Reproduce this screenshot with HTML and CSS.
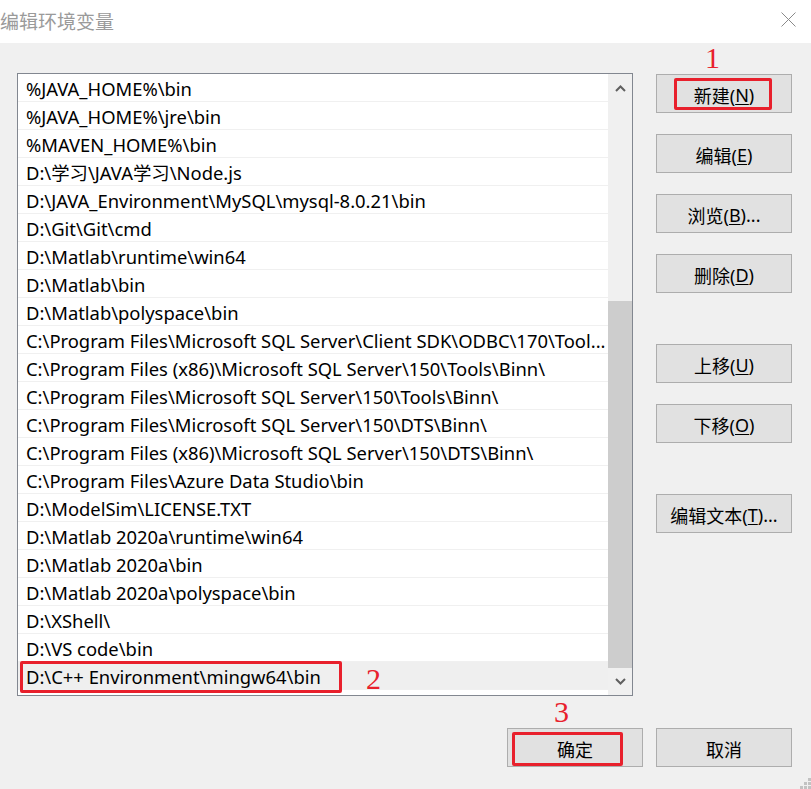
FILE: index.html
```html
<!DOCTYPE html>
<html lang="zh-CN">
<head>
    <meta charset="UTF-8">
    <title>编辑环境变量</title>
    <link rel="stylesheet" href="styles.css">
</head>
<body>
    <div class="dialog">
        <div class="titlebar">
            <span class="title">编辑环境变量</span>
            <svg class="close" width="15" height="15" viewBox="0 0 15 15">
                <path d="M0.5 0.5 L14.5 14.5 M14.5 0.5 L0.5 14.5" stroke="#8a8a8a" stroke-width="1" fill="none"/>
            </svg>
        </div>

        <div class="main">
            <div class="listbox">
                <ul class="list">
                    <li>%JAVA_HOME%\bin</li>
                    <li>%JAVA_HOME%\jre\bin</li>
                    <li>%MAVEN_HOME%\bin</li>
                    <li>D:\学习\JAVA学习\Node.js</li>
                    <li>D:\JAVA_Environment\MySQL\mysql-8.0.21\bin</li>
                    <li>D:\Git\Git\cmd</li>
                    <li>D:\Matlab\runtime\win64</li>
                    <li>D:\Matlab\bin</li>
                    <li>D:\Matlab\polyspace\bin</li>
                    <li class="clip">C:\Program Files\Microsoft SQL Server\Client SDK\ODBC\170\Tool...</li>
                    <li>C:\Program Files (x86)\Microsoft SQL Server\150\Tools\Binn\</li>
                    <li>C:\Program Files\Microsoft SQL Server\150\Tools\Binn\</li>
                    <li>C:\Program Files\Microsoft SQL Server\150\DTS\Binn\</li>
                    <li>C:\Program Files (x86)\Microsoft SQL Server\150\DTS\Binn\</li>
                    <li>C:\Program Files\Azure Data Studio\bin</li>
                    <li>D:\ModelSim\LICENSE.TXT</li>
                    <li>D:\Matlab 2020a\runtime\win64</li>
                    <li>D:\Matlab 2020a\bin</li>
                    <li>D:\Matlab 2020a\polyspace\bin</li>
                    <li>D:\XShell\</li>
                    <li>D:\VS code\bin</li>
                    <li class="selected">D:\C++ Environment\mingw64\bin<span class="redbox row-box"></span></li>
                </ul>
                <div class="scrollbar">
                    <div class="arrow up">
                        <svg width="11" height="7" viewBox="0 0 11 7"><path d="M1 6 L5.5 1.5 L10 6" stroke="#606060" stroke-width="2" fill="none"/></svg>
                    </div>
                    <div class="track"></div>
                    <div class="thumb"></div>
                    <div class="arrow down">
                        <svg width="11" height="7" viewBox="0 0 11 7"><path d="M1 1 L5.5 5.5 L10 1" stroke="#606060" stroke-width="2" fill="none"/></svg>
                    </div>
                </div>
            </div>

            <div class="side">
                <div class="btn">新建(<u>N</u>)<span class="redbox new-box"></span></div>
                <div class="btn">编辑(<u>E</u>)</div>
                <div class="btn">浏览(<u>B</u>)...</div>
                <div class="btn">删除(<u>D</u>)</div>
                <div class="btn group">上移(<u>U</u>)</div>
                <div class="btn">下移(<u>O</u>)</div>
                <div class="btn group">编辑文本(<u>T</u>)...</div>
            </div>
        </div>

        <div class="footer">
            <div class="btn">确定<span class="redbox ok-box"></span></div>
            <div class="btn">取消</div>
        </div>

        <span class="mark mark-1">1</span>
        <span class="mark mark-2">2</span>
        <span class="mark mark-3">3</span>

        <svg class="grip" width="12" height="12" viewBox="0 0 12 12">
            <rect x="9" y="1" width="3" height="3" fill="#c2c2c2"/>
            <rect x="5" y="5" width="3" height="3" fill="#c2c2c2"/>
            <rect x="9" y="5" width="3" height="3" fill="#c2c2c2"/>
            <rect x="1" y="9" width="3" height="3" fill="#c2c2c2"/>
            <rect x="5" y="9" width="3" height="3" fill="#c2c2c2"/>
            <rect x="9" y="9" width="3" height="3" fill="#c2c2c2"/>
        </svg>
    </div>
</body>
</html>
```

FILE: styles.css
```css
body {
    margin: 0;
    background-color: #f0f0f0;
    font-family: "Noto Sans", "Noto Sans CJK SC", sans-serif;
}
.dialog {
    position: relative;
    width: 811px;
    height: 789px;
    overflow: hidden;
}
.titlebar {
    height: 43px;
    background-color: #fff;
    display: flex;
    align-items: center;
    justify-content: space-between;
}
.title {
    font-family: "Noto Sans CJK SC", sans-serif;
    font-size: 19px;
    color: #9a9a9a;
    margin-top: -2px;
}
.close {
    margin-right: 15px;
    margin-top: -4px;
}
.main {
    display: flex;
    padding: 30px 0 0 17px;
}
.listbox {
    width: 616px;
    height: 623px;
    box-sizing: border-box;
    border: 1px solid #828790;
    background-color: #fff;
    display: flex;
}
.list {
    flex: 1;
    margin: 0;
    padding: 0;
    list-style: none;
    min-width: 0;
}
.list li {
    position: relative;
    height: 28px;
    box-sizing: border-box;
    border-bottom: 1px solid #f0f0f0;
    padding: 2px 0 0 8px;
    font-size: 18.4px;
    line-height: 25px;
    white-space: nowrap;
    color: #000;
}
.list li.clip {
    overflow: hidden;
}
.list li.selected {
    background-color: #efefef;
}
.scrollbar {
    width: 24px;
    background-color: #f0f0f0;
    display: flex;
    flex-direction: column;
}
.arrow {
    height: 28px;
    display: flex;
    align-items: center;
    justify-content: center;
}
.arrow.down {
    height: 27px;
}
.track {
    flex: 1;
}
.thumb {
    height: 367px;
    background-color: #cdcdcd;
}
.side {
    display: flex;
    flex-direction: column;
    gap: 21px;
    margin-left: 23px;
    padding-top: 1px;
}
.side .group {
    margin-top: 30px;
}
.btn {
    position: relative;
    width: 136px;
    height: 39px;
    box-sizing: border-box;
    border: 1px solid #adadad;
    background-color: #e1e1e1;
    font-size: 18px;
    color: #000;
    display: flex;
    align-items: center;
    justify-content: center;
    padding-top: 2px;
}
.btn u {
    text-underline-offset: 2px;
}
.footer {
    display: flex;
    justify-content: flex-end;
    gap: 13px;
    padding: 32px 19px 0 0;
}
.redbox {
    position: absolute;
    box-sizing: border-box;
    border: 3px solid #e8202c;
    border-radius: 2px;
}
.row-box {
    left: 2px;
    top: -1px;
    width: 322px;
    height: 32px;
}
.new-box {
    left: 17px;
    top: 3px;
    width: 98px;
    height: 32px;
}
.ok-box {
    left: 4px;
    top: 3px;
    width: 111px;
    height: 34px;
}
.mark {
    position: absolute;
    font-family: "Liberation Serif", serif;
    font-size: 30px;
    line-height: 30px;
    color: #e8202c;
}
.mark-1 {
    left: 705px;
    top: 43px;
}
.mark-2 {
    left: 366px;
    top: 664px;
}
.mark-3 {
    left: 554px;
    top: 697px;
}
.grip {
    position: absolute;
    right: 0;
    bottom: 0;
}
```
